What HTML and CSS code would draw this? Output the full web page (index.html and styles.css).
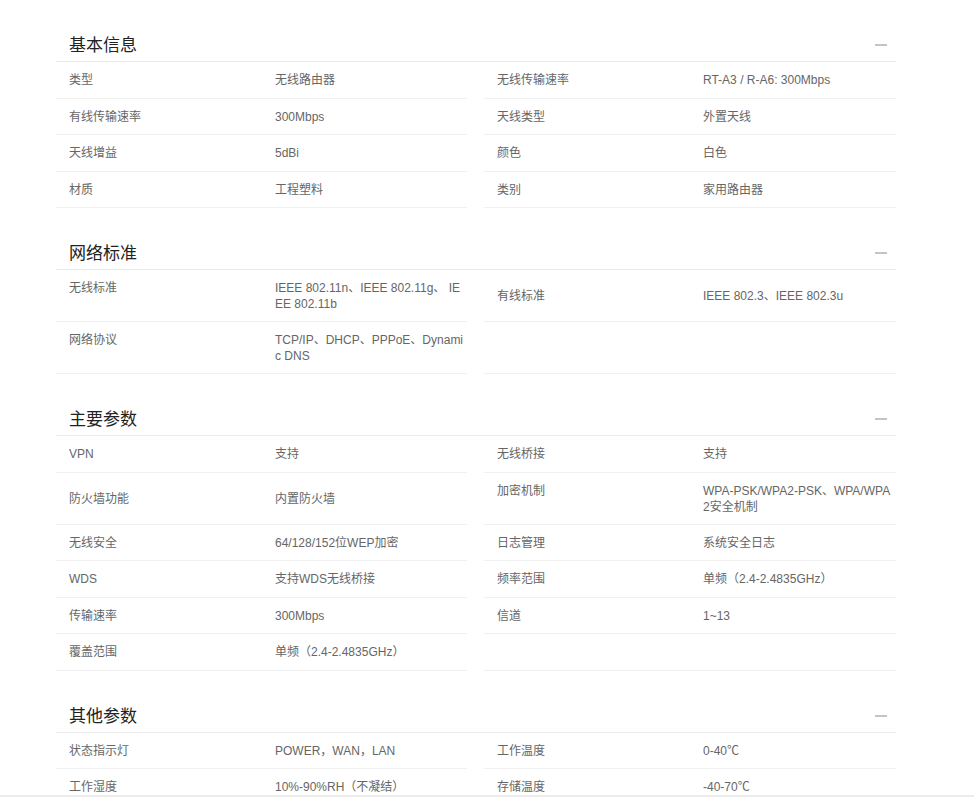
FILE: index.html
```html
<!DOCTYPE html>
<html lang="zh">
<head>
<meta charset="utf-8">
<link rel="stylesheet" href="styles.css">
</head>
<body>
<div class="page">
  <section class="sec">
    <div class="sec-head"><h2 class="sec-title">基本信息</h2><span class="minus"></span></div>
    <div class="row">
      <div class="half"><div class="pair"><span class="lab">类型</span><span class="val">无线路由器</span></div></div>
      <div class="half"><div class="pair"><span class="lab">无线传输速率</span><span class="val">RT-A3 / R-A6: 300Mbps</span></div></div>
    </div>
    <div class="row">
      <div class="half"><div class="pair"><span class="lab">有线传输速率</span><span class="val">300Mbps</span></div></div>
      <div class="half"><div class="pair"><span class="lab">天线类型</span><span class="val">外置天线</span></div></div>
    </div>
    <div class="row">
      <div class="half"><div class="pair"><span class="lab">天线增益</span><span class="val">5dBi</span></div></div>
      <div class="half"><div class="pair"><span class="lab">颜色</span><span class="val">白色</span></div></div>
    </div>
    <div class="row">
      <div class="half"><div class="pair"><span class="lab">材质</span><span class="val">工程塑料</span></div></div>
      <div class="half"><div class="pair"><span class="lab">类别</span><span class="val">家用路由器</span></div></div>
    </div>
  </section>

  <section class="sec">
    <div class="sec-head"><h2 class="sec-title">网络标准</h2><span class="minus"></span></div>
    <div class="row">
      <div class="half"><div class="pair"><span class="lab">无线标准</span><span class="val">IEEE 802.11n、IEEE 802.11g、 IEEE 802.11b</span></div></div>
      <div class="half"><div class="pair"><span class="lab">有线标准</span><span class="val">IEEE 802.3、IEEE 802.3u</span></div></div>
    </div>
    <div class="row">
      <div class="half"><div class="pair"><span class="lab">网络协议</span><span class="val">TCP/IP、DHCP、PPPoE、Dynamic DNS</span></div></div>
      <div class="half"></div>
    </div>
  </section>

  <section class="sec">
    <div class="sec-head"><h2 class="sec-title">主要参数</h2><span class="minus"></span></div>
    <div class="row">
      <div class="half"><div class="pair"><span class="lab">VPN</span><span class="val">支持</span></div></div>
      <div class="half"><div class="pair"><span class="lab">无线桥接</span><span class="val">支持</span></div></div>
    </div>
    <div class="row">
      <div class="half"><div class="pair"><span class="lab">防火墙功能</span><span class="val">内置防火墙</span></div></div>
      <div class="half"><div class="pair"><span class="lab">加密机制</span><span class="val">WPA-PSK/WPA2-PSK、WPA/WPA2安全机制</span></div></div>
    </div>
    <div class="row">
      <div class="half"><div class="pair"><span class="lab">无线安全</span><span class="val">64/128/152位WEP加密</span></div></div>
      <div class="half"><div class="pair"><span class="lab">日志管理</span><span class="val">系统安全日志</span></div></div>
    </div>
    <div class="row">
      <div class="half"><div class="pair"><span class="lab">WDS</span><span class="val">支持WDS无线桥接</span></div></div>
      <div class="half"><div class="pair"><span class="lab">频率范围</span><span class="val">单频（2.4-2.4835GHz）</span></div></div>
    </div>
    <div class="row">
      <div class="half"><div class="pair"><span class="lab">传输速率</span><span class="val">300Mbps</span></div></div>
      <div class="half"><div class="pair"><span class="lab">信道</span><span class="val">1~13</span></div></div>
    </div>
    <div class="row">
      <div class="half"><div class="pair"><span class="lab">覆盖范围</span><span class="val">单频（2.4-2.4835GHz）</span></div></div>
      <div class="half"></div>
    </div>
  </section>

  <section class="sec">
    <div class="sec-head"><h2 class="sec-title">其他参数</h2><span class="minus"></span></div>
    <div class="row">
      <div class="half"><div class="pair"><span class="lab">状态指示灯</span><span class="val">POWER，WAN，LAN</span></div></div>
      <div class="half"><div class="pair"><span class="lab">工作温度</span><span class="val">0-40℃</span></div></div>
    </div>
    <div class="row">
      <div class="half"><div class="pair"><span class="lab">工作湿度</span><span class="val">10%-90%RH（不凝结）</span></div></div>
      <div class="half"><div class="pair"><span class="lab">存储温度</span><span class="val">-40-70℃</span></div></div>
    </div>
  </section>
</div>
<div class="bottom-edge"></div>
</body>
</html>
```

FILE: styles.css
```css
* { box-sizing: border-box; }
html, body { margin: 0; padding: 0; background: #fff; }
body {
  font-family: "Liberation Sans", Arial, "Noto Sans CJK SC", sans-serif;
  font-size: 12px;
  color: #666;
}
.page {
  width: 840px;
  margin-left: 56px;
  padding-top: 21px;
  padding-bottom: 40px;
}
.sec + .sec { margin-top: 21px; }
.sec-head {
  height: 41px;
  border-bottom: 1px solid #ebebeb;
  display: flex;
  align-items: flex-start;
  justify-content: space-between;
  padding-top: 13px;
}
.sec-title {
  margin: 0 0 0 13px;
  font-size: 17px;
  font-weight: normal;
  line-height: 24px;
  color: #222;
  font-family: "Liberation Sans", "Noto Sans CJK SC", sans-serif;
}
.minus {
  width: 12px;
  height: 2px;
  background: #c4c4c4;
  margin-top: 10px;
  margin-right: 9px;
}
.row {
  display: grid;
  grid-template-columns: 411px 412px;
  column-gap: 17px;
}
.half {
  border-bottom: 1px solid #f0f0f0;
  display: flex;
  align-items: center;
  padding: 10px 0 9px 13px;
  min-height: 36.5px;
}
.pair {
  display: flex;
  align-items: flex-start;
  width: 100%;
  line-height: 16px;
}
.lab {
  width: 206px;
  flex: none;
}
.val {
  flex: 1;
  min-width: 0;
  word-break: break-all;
}
.bottom-edge {
  position: fixed;
  left: 0;
  right: 0;
  bottom: 0;
  height: 2px;
  background: #ececec;
}
```
